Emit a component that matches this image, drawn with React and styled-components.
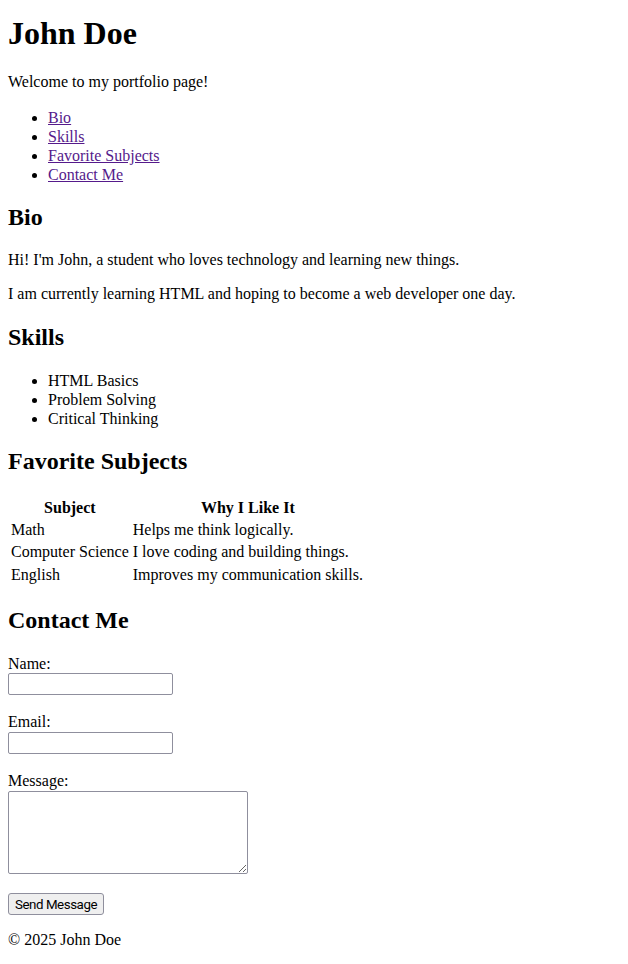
import React from "react";
import styled, { createGlobalStyle } from "styled-components";

const Global = createGlobalStyle`
  html, body { margin: 0; padding: 0; background: #fff; }
  body {
    font-family: "Liberation Serif", "Times New Roman", serif;
    font-size: 16px;
    line-height: 1.15;
    color: #000;
  }
`;

const Page = styled.div`
  padding: 15px 8px 8px;
`;

const Title = styled.h1`
  font-size: 32px;
  font-weight: bold;
  margin: 0 0 21.44px;
`;

const SectionTitle = styled.h2`
  font-size: 24px;
  font-weight: bold;
  margin: 19.92px 0;
`;

const Para = styled.p`
  margin: 16px 0;
`;

const List = styled.ul`
  margin: 16px 0;
  padding-left: 40px;
  list-style: disc;
`;

const Item = styled.li`
  line-height: 19px;
`;

const NavLink = styled.a`
  color: #551a8b;
  text-decoration: underline;
`;

const Table = styled.table`
  border-collapse: separate;
  border-spacing: 2px;
  margin: 0;
`;

const Th = styled.th`
  padding: 1px;
  font-weight: bold;
  text-align: center;
`;

const Td = styled.td`
  padding: 1px;
  text-align: left;
`;

const Form = styled.form`
  margin: 0;
`;

const Label = styled.label`
  display: inline;
`;

const TextInput = styled.input`
  box-sizing: border-box;
  width: 165px;
  height: 22px;
  border: 1px solid #8f8f9d;
  border-radius: 2px;
  padding: 1px 2px;
  font: 13.33px Arial, "Liberation Sans", sans-serif;
  background: #fff;
`;

const TextArea = styled.textarea`
  box-sizing: border-box;
  width: 240px;
  height: 83px;
  border: 1px solid #8f8f9d;
  border-radius: 2px;
  padding: 2px;
  font: 13.33px "Liberation Mono", monospace;
  vertical-align: text-bottom;
`;

const SendButton = styled.button`
  box-sizing: border-box;
  height: 22px;
  padding: 1px 6px;
  font: 13.33px Roboto, "Liberation Sans", sans-serif;
  letter-spacing: -0.45px;
  color: #000;
  background: #efefef;
  border: 1px solid #8f8f9d;
  border-radius: 3px;
`;

const Footer = styled.footer`
  margin: 0;
`;

export default function App() {
  return (
    <Page>
      <Global />
      <header>
        <Title>John Doe</Title>
        <Para>Welcome to my portfolio page!</Para>
        <nav>
          <List>
            <Item><NavLink href="#bio">Bio</NavLink></Item>
            <Item><NavLink href="#skills">Skills</NavLink></Item>
            <Item><NavLink href="#subjects">Favorite Subjects</NavLink></Item>
            <Item><NavLink href="#contact">Contact Me</NavLink></Item>
          </List>
        </nav>
      </header>
      <main>
        <section id="bio">
          <SectionTitle>Bio</SectionTitle>
          <Para>Hi! I'm John, a student who loves technology and learning new things.</Para>
          <Para>I am currently learning HTML and hoping to become a web developer one day.</Para>
        </section>
        <section id="skills">
          <SectionTitle>Skills</SectionTitle>
          <List>
            <Item>HTML Basics</Item>
            <Item>Problem Solving</Item>
            <Item>Critical Thinking</Item>
          </List>
        </section>
        <section id="subjects">
          <SectionTitle>Favorite Subjects</SectionTitle>
          <Table>
            <thead>
              <tr><Th>Subject</Th><Th>Why I Like It</Th></tr>
            </thead>
            <tbody>
              <tr><Td>Math</Td><Td>Helps me think logically.</Td></tr>
              <tr><Td>Computer Science</Td><Td>I love coding and building things.</Td></tr>
              <tr><Td>English</Td><Td>Improves my communication skills.</Td></tr>
            </tbody>
          </Table>
        </section>
        <section id="contact">
          <SectionTitle>Contact Me</SectionTitle>
          <Form onSubmit={(e) => e.preventDefault()}>
            <Label htmlFor="name">Name:</Label><br />
            <TextInput type="text" id="name" /><br /><br />
            <Label htmlFor="email">Email:</Label><br />
            <TextInput type="email" id="email" /><br /><br />
            <Label htmlFor="message">Message:</Label><br />
            <TextArea id="message" /><br /><br />
            <SendButton type="submit">Send Message</SendButton>
          </Form>
        </section>
      </main>
      <Footer>
        <Para>&copy; 2025 John Doe</Para>
      </Footer>
    </Page>
  );
}
